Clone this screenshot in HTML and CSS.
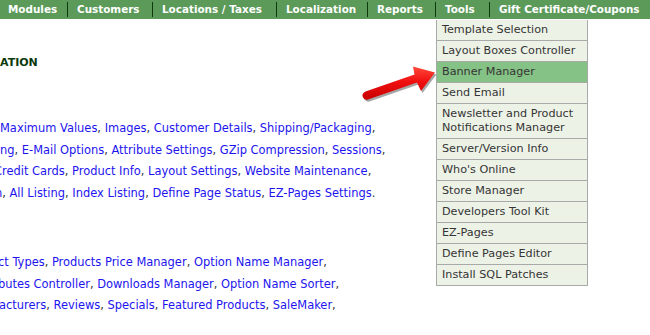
FILE: index.html
```html
<!DOCTYPE html>
<html lang="en">
<head>
  <meta charset="UTF-8" />
  <title>Admin - Tools</title>
  <link rel="stylesheet" href="styles.css">
</head>
<body>
  <div class="menu-bar">
    <div class="menu-item modules">Modules</div>
    <div class="menu-item customers">Customers</div>
    <div class="menu-item locations">Locations / Taxes</div>
    <div class="menu-item localization">Localization</div>
    <div class="menu-item reports">Reports</div>
    <div class="menu-item tools">Tools
      <ul class="dropdown">
        <li>Template Selection</li>
        <li>Layout Boxes Controller</li>
        <li class="hover">Banner Manager</li>
        <li>Send Email</li>
        <li>Newsletter and Product Notifications Manager</li>
        <li>Server/Version Info</li>
        <li>Who's Online</li>
        <li>Store Manager</li>
        <li>Developers Tool Kit</li>
        <li>EZ-Pages</li>
        <li>Define Pages Editor</li>
        <li>Install SQL Patches</li>
      </ul>
    </div>
    <div class="menu-item gift">Gift Certificate/Coupons</div>
  </div>

  <div class="content">
    <h2 class="heading">ATION</h2>

    <div class="link-block">
      <div class="line"><a href="#">Maximum Values</a>, <a href="#">Images</a>, <a href="#">Customer Details</a>, <a href="#">Shipping/Packaging</a>,</div>
      <div class="line"><a href="#">ng</a>, <a href="#">E-Mail Options</a>, <a href="#">Attribute Settings</a>, <a href="#">GZip Compression</a>, <a href="#">Sessions</a>,</div>
      <div class="line cut-c"><a href="#">Credit Cards</a>, <a href="#">Product Info</a>, <a href="#">Layout Settings</a>, <a href="#">Website Maintenance</a>,</div>
      <div class="line cut-n"><a href="#">n</a>, <a href="#">All Listing</a>, <a href="#">Index Listing</a>, <a href="#">Define Page Status</a>, <a href="#">EZ-Pages Settings</a>.</div>
    </div>

    <div class="link-block second">
      <div class="line cut-small"><a href="#">ct Types</a>, <a href="#">Products Price Manager</a>, <a href="#">Option Name Manager</a>,</div>
      <div class="line cut-small"><a href="#">butes Controller</a>, <a href="#">Downloads Manager</a>, <a href="#">Option Name Sorter</a>,</div>
      <div class="line cut-tiny"><a href="#">acturers</a>, <a href="#">Reviews</a>, <a href="#">Specials</a>, <a href="#">Featured Products</a>, <a href="#">SaleMaker</a>,</div>
    </div>
  </div>

  <!-- annotation arrow pointing at the Banner Manager entry -->
  <svg class="arrow" width="90" height="50" viewBox="355 58 90 50">
    <defs>
      <linearGradient id="red" x1="0" y1="0" x2="0" y2="1">
        <stop offset="0" stop-color="#ff4a3a"/>
        <stop offset="0.45" stop-color="#f01010"/>
        <stop offset="1" stop-color="#c80000"/>
      </linearGradient>
    </defs>
    <path d="M368 99.5 L417 82.5 L421 91 L435 72.5 L413 66.5 L414.5 74.5 L365.5 91.5 Q361 94 363 97.5 Q365 100.5 368 99.5 Z" fill="#000" opacity="0.35" transform="translate(1.5 2)"/>
    <path d="M368 99.5 L417 82.5 L421 91 L435 72.5 L413 66.5 L414.5 74.5 L365.5 91.5 Q361 94 363 97.5 Q365 100.5 368 99.5 Z" fill="url(#red)"/>
  </svg>
</body>
</html>
```

FILE: styles.css
```css
* {
  box-sizing: border-box;
}
body {
  margin: 0;
  background: #fff;
  font-family: "DejaVu Sans", Verdana, sans-serif;
  font-size: 11px;
  color: #333;
  overflow: hidden;
}
.menu-bar {
  display: flex;
  align-items: center;
  height: 19px;
  background-color: #5b9a59;
}
.menu-item {
  position: relative;
  flex: none;
  padding-left: 9px;
  border-left: 1px solid #0e3a0e;
  line-height: 15px;
  color: #fff;
  font-weight: bold;
  font-size: 10.4px;
  white-space: nowrap;
}
.menu-item.modules {
  width: 67px;
  padding-left: 8px;
  border-left: none;
}
.menu-item.customers {
  width: 85px;
}
.menu-item.locations {
  width: 124px;
}
.menu-item.localization {
  width: 91px;
}
.menu-item.reports {
  width: 68px;
}
.menu-item.tools {
  width: 54px;
}
.menu-item.gift {
  flex: 1;
}
.dropdown {
  position: absolute;
  top: 18px;
  left: 0;
  width: 152px;
  margin: 0;
  padding: 0;
  list-style: none;
  background-color: #edf2e7;
  border-left: 1px solid #a9a9a9;
  border-right: 1px solid #a9a9a9;
  z-index: 2;
}
.dropdown li {
  padding: 3px 5px;
  line-height: 14px;
  border-bottom: 1px solid #a9a9a9;
  color: #353535;
  font-size: 11.2px;
  font-weight: normal;
  white-space: normal;
}
.dropdown li.hover {
  background-color: #85c285;
}
.content {
  padding-top: 36px;
}
.heading {
  margin: 0 0 47px;
  font-size: 11px;
  line-height: 16px;
  font-weight: bold;
  color: #0d3a0d;
}
.link-block {
  font-size: 11.45px;
  line-height: 21.5px;
  white-space: nowrap;
}
.link-block.second {
  margin-top: 48px;
}
.link-block a {
  color: #1d14ee;
  text-decoration: none;
}
.cut-c {
  margin-left: -6px;
}
.cut-n {
  margin-left: -5px;
}
.cut-small {
  margin-left: -2px;
}
.cut-tiny {
  margin-left: -1px;
}
.arrow {
  position: absolute;
  left: 355px;
  top: 58px;
}
```
